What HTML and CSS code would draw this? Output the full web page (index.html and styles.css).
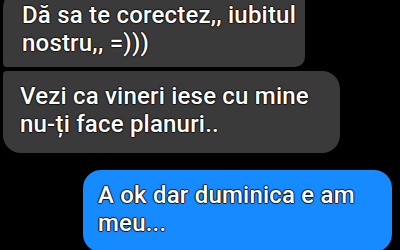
FILE: index.html
```html
<!DOCTYPE html>
<html lang="ro">
<head>
  <meta charset="UTF-8">
  <meta name="viewport" content="width=device-width, initial-scale=1.0">
  <title>Chat</title>
  <link rel="stylesheet" href="styles.css">
</head>
<body>
  <div class="chat">
    <div class="msg in first">
      Dă sa te corectez,, iubitul<br>nostru,, =)))
    </div>
    <div class="msg in last">
      Vezi ca vineri iese cu mine<br>nu-ți face planuri..
    </div>
    <div class="msg out">
      A ok dar duminica e am<br>meu...
    </div>
  </div>
</body>
</html>
```

FILE: styles.css
```css
body {
  margin: 0;
  background: #000;
  font-family: Roboto, "Noto Sans", sans-serif;
  overflow: hidden;
}

.chat {
  display: flex;
  flex-direction: column;
  margin-top: -10px;
  padding: 0 8px 0 3px;
}

.msg {
  box-sizing: border-box;
  color: #fff;
  font-size: 24px;
  font-weight: 500;
  line-height: 28px;
  letter-spacing: 0.2px;
  padding: 11px 0 15px 19px;
  white-space: nowrap;
  text-shadow: -1px 0 #151515, 1px 0 #151515, 0 -1px #151515, 0 1px #151515, 0 0 2px #000;
}

.in {
  align-self: flex-start;
  background: #3a3a3a;
}

.first {
  width: 302px;
  padding-bottom: 10px;
  border-radius: 18px 10px 10px 4px;
}

.last {
  width: 337px;
  margin-top: 4px;
  padding-left: 17px;
  border-radius: 4px 18px 18px 18px;
}

.out {
  align-self: flex-end;
  width: 309px;
  margin-top: 17px;
  padding-left: 15px;
  border-radius: 18px;
  background: #168aff;
  text-shadow: -1px 0 #0a1a30, 1px 0 #0a1a30, 0 -1px #0a1a30, 0 1px #0a1a30, 0 0 2px #001030;
}
```
